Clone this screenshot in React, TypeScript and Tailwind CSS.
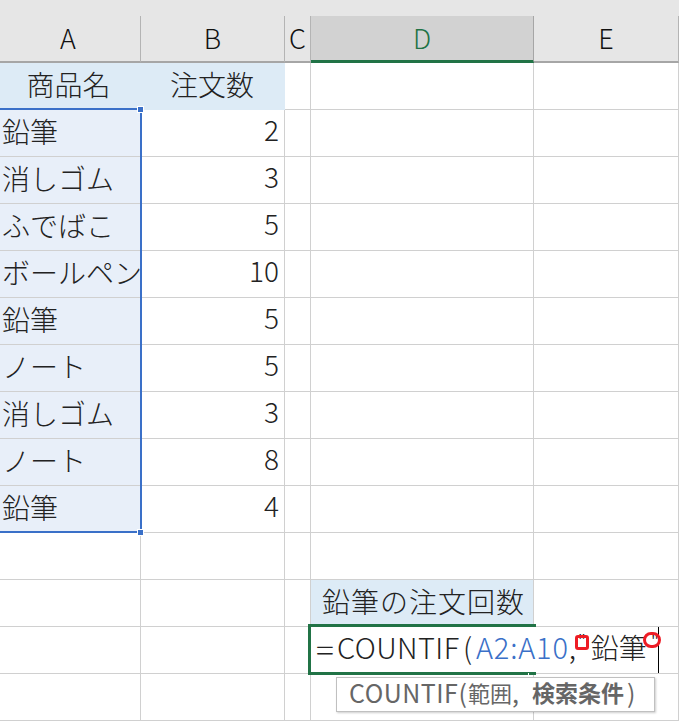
const jp = "font-['Noto_Sans_CJK_JP','Noto_Sans',sans-serif]";

const rows: [string, string][] = [
  ['鉛筆', '2'],
  ['消しゴム', '3'],
  ['ふでばこ', '5'],
  ['ボールペン', '10'],
  ['鉛筆', '5'],
  ['ノート', '5'],
  ['消しゴム', '3'],
  ['ノート', '8'],
  ['鉛筆', '4'],
];

const gridCols = 'grid grid-cols-[141px_144px_26px_223px_145px]';
const cell = 'h-[47px] border-r border-b border-[#d0d0d0] overflow-hidden whitespace-nowrap text-[28px] leading-[42px] text-[#222] font-light';

function ColHeader({ label, active, className }: { label: string; active?: boolean; className?: string }) {
  return (
    <div
      className={
        (active
          ? 'h-[47px] bg-[#d2d2d2] border-r border-r-[#a6a6a6] border-b-[3px] border-b-[#217346] text-center text-[27px] leading-[44px] text-[#217346] font-light '
          : 'h-[47px] bg-[#e6e6e6] border-r border-r-[#b4b4b4] border-b-[2px] border-b-[#a6a6a6] text-center text-[27px] leading-[44px] text-[#111] font-light ') +
        (className ?? '')
      }
    >
      {label}
    </div>
  );
}

function EmptyRow() {
  return (
    <div className={gridCols}>
      <div className={cell} />
      <div className={cell} />
      <div className={cell} />
      <div className={cell} />
      <div className={cell} />
    </div>
  );
}

export default function App() {
  return (
    <div className={`relative w-[679px] h-[725px] overflow-hidden bg-white ${jp}`}>
      <div className="h-[16px] bg-[#e6e6e6]" />
      <div className={gridCols}>
        <ColHeader label="A" className="pr-[4px]" />
        <ColHeader label="B" />
        <ColHeader label="C" />
        <ColHeader label="D" active />
        <ColHeader label="E" />
      </div>

      <div className={gridCols}>
        <div className={`${cell} border-r-0 border-b-0 bg-[#ddebf6] text-center pr-[4px]`}>商品名</div>
        <div className={`${cell} border-r-0 border-b-0 bg-[#ddebf6] text-center pr-[2px]`}>注文数</div>
        <div className={cell} />
        <div className={cell} />
        <div className={cell} />
      </div>

      {rows.map(([name, qty], i) => (
        <div key={i} className={gridCols}>
          <div className={`${cell} bg-[#e8eff9] pl-[2px]`}>{name}</div>
          <div className={`${cell} pr-[5px] text-right`}>
            <div className="-mt-[2px]">{qty}</div>
          </div>
          <div className={cell} />
          <div className={cell} />
          <div className={cell} />
        </div>
      ))}

      <EmptyRow />

      <div className={gridCols}>
        <div className={cell} />
        <div className={cell} />
        <div className={cell} />
        <div className={`${cell} bg-[#ddebf6] border-0 pl-[11px] tracking-[1px]`}>鉛筆の注文回数</div>
        <div className={cell} />
      </div>

      <EmptyRow />
      <EmptyRow />

      {/* selected range A2:A10 */}
      <div className="absolute left-[-4px] top-[108px] w-[146px] h-[425px] border-2 border-[#3a70c8] pointer-events-none" />
      <div className="absolute left-[137px] top-[106px] w-[7px] h-[7px] bg-[#3a70c8] border border-white" />
      <div className="absolute left-[137px] top-[529px] w-[7px] h-[7px] bg-[#3a70c8] border border-white" />

      {/* cell being edited */}
      <div className="absolute left-[311px] top-[627px] w-[348px] h-[46px] bg-white" />
      <div className="absolute left-[308px] top-[624px] w-[228px] h-[51px] border-[3px] border-r-0 border-[#217346]" />
      <div className="absolute left-[528px] top-[673px] w-[1px] h-[2px] bg-white" />
      <div className="absolute left-[658px] top-[627px] w-[1px] h-[46px] bg-black" />
      <div className="absolute left-[316px] top-[624px] h-[46px] flex items-center whitespace-nowrap text-[29px] text-[#222] font-light tracking-[0.4px]">
        <span className="inline-block w-[21px] pt-[4px] origin-left scale-x-[1.15]">=</span>
        <span className="w-[126px]">COUNTIF</span>
        <span className="w-[13px]">(</span>
        <span className="tracking-[0.8px] text-[#3a70c8]">A2:A10</span>
        <span className="w-[9px]">,</span>
        <span className="w-[13px] self-start text-[20px] leading-[34px]">"</span>
        <span className="text-[28px] tracking-normal">鉛筆</span>
        <span className="pl-[4px] self-start text-[20px] leading-[34px]">"</span>
      </div>

      {/* red marks around the quotes */}
      <div className="absolute left-[575px] top-[635px] w-[14px] h-[15px] border-[3px] border-[#ee1c25] rounded-[3px]" />
      <div className="absolute left-[643px] top-[632px] w-[18px] h-[16px] border-[3px] border-[#ee1c25] rounded-full" />

      {/* function hint */}
      <div className="absolute left-[336px] top-[677px] w-[319px] h-[35px] flex items-center pl-[12px] pb-[4px] bg-white border border-[#c0c0c0] shadow-[1px_1px_2px_rgba(0,0,0,0.2)] whitespace-nowrap text-[25px] text-[#666]">
        <span className="w-[119px] tracking-[0.5px]">COUNTIF(</span>
        <span className="text-[22px]">範囲</span>
        <span className="w-[20px]">,</span>
        <span className="text-[23px] font-bold">検索条件</span>
        <span className="pl-[3px]">)</span>
      </div>
    </div>
  );
}
